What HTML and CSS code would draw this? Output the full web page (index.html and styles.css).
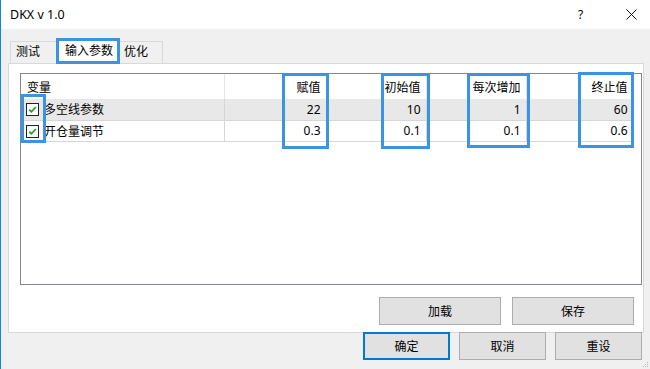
FILE: index.html
```html
<!DOCTYPE html>
<html>
<head>
    <title>DKX v 1.0</title>
    <link rel="stylesheet" href="styles.css">
</head>
<body>
    <div class="window">
        <div class="titlebar">
            <span class="title">DKX v 1.0</span>
            <span class="help">?</span>
            <span class="close">
                <svg width="11" height="11" viewBox="0 0 11 11"><path d="M0.5 0.5 L10.5 10.5 M10.5 0.5 L0.5 10.5" stroke="#111" stroke-width="1"/></svg>
            </span>
        </div>

        <div class="client">
            <div class="tabs">
                <div class="tab tab-test">测试</div>
                <div class="tab tab-active">输入参数</div>
                <div class="tab tab-opt">优化</div>
            </div>

            <div class="panel">
                <div class="listview">
                    <table>
                        <tr class="head">
                            <td class="c-name">变量</td>
                            <td class="c-val">赋值</td>
                            <td class="c-start">初始值</td>
                            <td class="c-step">每次增加</td>
                            <td class="c-end">终止值</td>
                        </tr>
                        <tr class="row selected">
                            <td class="c-name"><span class="check"><svg width="13" height="13" viewBox="0 0 13 13"><rect x="0.5" y="0.5" width="12" height="12" fill="#fff" stroke="#222"/><path d="M3.2 6.6 L5.4 8.8 L9.8 4" fill="none" stroke="#21a121" stroke-width="1.8"/></svg></span>多空线参数</td>
                            <td>22</td>
                            <td>10</td>
                            <td>1</td>
                            <td>60</td>
                        </tr>
                        <tr class="row">
                            <td class="c-name"><span class="check"><svg width="13" height="13" viewBox="0 0 13 13"><rect x="0.5" y="0.5" width="12" height="12" fill="#fff" stroke="#222"/><path d="M3.2 6.6 L5.4 8.8 L9.8 4" fill="none" stroke="#21a121" stroke-width="1.8"/></svg></span>开仓量调节</td>
                            <td>0.3</td>
                            <td>0.1</td>
                            <td>0.1</td>
                            <td>0.6</td>
                        </tr>
                    </table>
                </div>

                <div class="panel-buttons">
                    <button>加载</button>
                    <button>保存</button>
                </div>
            </div>

            <div class="dialog-buttons">
                <button class="default">确定</button>
                <button>取消</button>
                <button>重设</button>
            </div>
        </div>

        <!-- annotation boxes drawn over the dialog -->
        <div class="mark mark-tab"></div>
        <div class="mark mark-check"></div>
        <div class="mark mark-val"></div>
        <div class="mark mark-start"></div>
        <div class="mark mark-step"></div>
        <div class="mark mark-end"></div>

        <svg class="grip" width="6" height="6" viewBox="0 0 6 6">
            <rect x="4" y="0" width="1" height="1" fill="#b5b5b5"/>
            <rect x="2" y="2" width="1" height="1" fill="#b5b5b5"/>
            <rect x="4" y="2" width="1" height="1" fill="#b5b5b5"/>
            <rect x="0" y="4" width="1" height="1" fill="#b5b5b5"/>
            <rect x="2" y="4" width="1" height="1" fill="#b5b5b5"/>
            <rect x="4" y="4" width="1" height="1" fill="#b5b5b5"/>
        </svg>
    </div>
</body>
</html>
```

FILE: styles.css
```css
body {
    margin: 0;
    padding: 0;
    background-color: #f0f0f0;
    font-family: "Noto Sans", "Noto Sans CJK SC", sans-serif;
    font-size: 12px;
    color: #000;
}

.window {
    position: relative;
    width: 650px;
    height: 369px;
    box-sizing: border-box;
    border-left: 1px solid #1883d7;
    background-color: #f0f0f0;
    overflow: hidden;
}

.titlebar {
    height: 29px;
    background-color: #fff;
    display: flex;
    align-items: center;
    padding-left: 9px;
}

.title {
    flex: 1;
    font-size: 12.5px;
    line-height: 14px;
}

.help {
    width: 10px;
    font-size: 12px;
    margin-right: 38px;
    line-height: 14px;
}

.close {
    width: 11px;
    height: 11px;
    margin-right: 13px;
    display: flex;
}

.client {
    padding-left: 7px;
}

/* tabs */
.tabs {
    display: flex;
    align-items: flex-end;
    height: 25px;
    margin-top: 9px;
    padding-left: 2px;
    position: relative;
    z-index: 1;
}

.tab {
    height: 22px;
    box-sizing: border-box;
    border: 1px solid #d9d9d9;
    border-bottom: none;
    background-color: #f0f0f0;
    line-height: 20px;
    padding-left: 5px;
}

.tab-test {
    width: 47px;
}

.tab-active {
    width: 63px;
    height: 26px;
    margin-bottom: -1px;
    margin-left: -1px;
    margin-right: -1px;
    background-color: #fff;
    line-height: 24px;
    padding-left: 8px;
}

.tab-opt {
    width: 45px;
    padding-left: 5px;
}

.panel {
    width: 636px;
    height: 270px;
    box-sizing: border-box;
    border: 1px solid #d9d9d9;
    background-color: #fff;
    padding-top: 9px;
    padding-left: 11px;
}

.listview {
    width: 622px;
    height: 212px;
    box-sizing: border-box;
    border: 1px solid #828790;
    background-color: #fff;
}

.listview table {
    border-collapse: collapse;
    table-layout: fixed;
}

.listview td {
    padding: 0 5px 0 0;
    text-align: right;
    white-space: nowrap;
    box-sizing: border-box;
}

.head td {
    height: 25px;
    border-right: 1px solid #e5e5e5;
    padding-top: 1px;
}

.row td {
    height: 21px;
    border-right: 1px solid #d6d6d6;
    border-bottom: 1px solid #d6d6d6;
}

.row.selected td {
    background-color: #e8e8e8;
}

.listview td.c-name {
    width: 203px;
    text-align: left;
    padding-left: 6px;
}

.row td.c-name {
    padding-left: 5px;
}

.c-val {
    width: 102px;
}

.c-start,
.c-step {
    width: 100px;
}

.c-end {
    width: 107px;
}

.check {
    display: inline-block;
    width: 13px;
    height: 13px;
    vertical-align: -2px;
    margin-right: 5px;
}

.check svg {
    display: block;
}

/* buttons */
button {
    font-family: "Noto Sans", "Noto Sans CJK SC", sans-serif;
    font-size: 12px;
    background-color: #e1e1e1;
    border: 1px solid #adadad;
    padding: 0;
    color: #000;
}

.panel-buttons {
    display: flex;
    justify-content: flex-end;
    gap: 11px;
    margin-top: 12px;
    padding-right: 9px;
}

.panel-buttons button {
    width: 122px;
    height: 28px;
}

.dialog-buttons {
    display: flex;
    justify-content: flex-end;
    gap: 9px;
    margin-top: -1px;
    padding-right: 8px;
    position: relative;
}

.dialog-buttons button {
    width: 87px;
    height: 28px;
}

.dialog-buttons button.default {
    border: 2px solid #0078d7;
}

/* blue annotation rectangles */
.mark {
    position: absolute;
    border: 3px solid #3a94e3;
    box-sizing: border-box;
    z-index: 5;
}

.mark-tab {
    left: 55px;
    top: 38px;
    width: 64px;
    height: 26px;
}

.mark-check {
    left: 20px;
    top: 94px;
    width: 25px;
    height: 49px;
}

.mark-val {
    left: 281px;
    top: 73px;
    width: 47px;
    height: 76px;
}

.mark-start {
    left: 380px;
    top: 73px;
    width: 49px;
    height: 76px;
}

.mark-step {
    left: 466px;
    top: 73px;
    width: 63px;
    height: 75px;
}

.mark-end {
    left: 577px;
    top: 72px;
    width: 56px;
    height: 76px;
}

.grip {
    position: absolute;
    right: 1px;
    bottom: 1px;
}
```
